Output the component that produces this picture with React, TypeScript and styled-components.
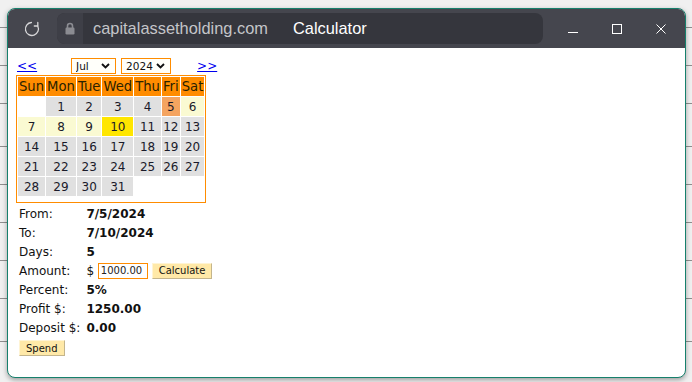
import { createGlobalStyle, styled } from 'styled-components'

const gridLines = [27, 65, 103, 146, 184, 222, 260, 298, 341]

const GlobalStyle = createGlobalStyle`
  html, body { margin: 0; height: 100%; }
  body {
    overflow: hidden;
    background-color: #f0f0f0;
    background-image: ${gridLines.map(() => 'linear-gradient(#8e8e8e, #8e8e8e)').join(', ')};
    background-size: 100% 1px;
    background-repeat: no-repeat;
    background-position: ${gridLines.map(y => `0 ${y}px`).join(', ')};
    font-family: 'DejaVu Sans', Verdana, sans-serif;
  }
  #root { padding: 8px 0 0 7px; }
`

type Tone = 'none' | 'day' | 'from' | 'range' | 'to'

const toneBg: Record<Tone, string> = {
	none: 'transparent',
	day: '#e0e0e0',
	from: '#f4a460',
	range: '#fafad2',
	to: '#ffe600',
}

const days = ['Sun', 'Mon', 'Tue', 'Wed', 'Thu', 'Fri', 'Sat']

function buildWeeks() {
	const cells: (number | null)[] = [null]
	for (let d = 1; d <= 31; d++) cells.push(d)
	while (cells.length % 7) cells.push(null)
	const weeks: (number | null)[][] = []
	for (let i = 0; i < cells.length; i += 7) weeks.push(cells.slice(i, i + 7))
	return weeks
}

function toneOf(d: number | null): Tone {
	if (d === null) return 'none'
	if (d === 5) return 'from'
	if (d === 10) return 'to'
	if (d > 5 && d < 10) return 'range'
	return 'day'
}

const info: [string, string][] = [
	['From:', '7/5/2024'],
	['To:', '7/10/2024'],
	['Days:', '5'],
]

const results: [string, string][] = [
	['Percent:', '5%'],
	['Profit $:', '1250.00'],
	['Deposit $:', '0.00'],
]

export default function App() {
	const weeks = buildWeeks()

	return (
		<>
			<GlobalStyle />
			<Window>
				<TitleBar>
					<Reload>
						<svg width="16" height="16" viewBox="0 0 16 16" fill="none" stroke="#d6d6d8" strokeWidth="1.3" strokeLinecap="round" strokeLinejoin="round">
							<path d="M7.4 1.5 A6.5 6.5 0 1 0 13.7 5" />
							<path d="M13.8 1.4 V5 H10.3" />
						</svg>
					</Reload>
					<Address>
						<LockBox>
							<svg width="10" height="13" viewBox="0 0 10 13">
								<path d="M2.5 6 V4 a2.5 2.5 0 0 1 5 0 V6" fill="none" stroke="#8b8c92" strokeWidth="1.6" />
								<rect x="0.5" y="5.5" width="9" height="7" rx="1.2" fill="#8b8c92" />
							</svg>
						</LockBox>
						<Domain>capitalassetholding.com</Domain>
						<PageTitle>Calculator</PageTitle>
					</Address>
					<Controls>
						<Control>
							<svg width="12" height="12" viewBox="0 0 12 12">
								<path d="M1 9.5 H11" stroke="#fff" strokeWidth="1" />
							</svg>
						</Control>
						<Control>
							<svg width="12" height="12" viewBox="0 0 12 12">
								<rect x="1.5" y="1.5" width="9" height="9" fill="none" stroke="#fff" strokeWidth="1" />
							</svg>
						</Control>
						<Control>
							<svg width="12" height="12" viewBox="0 0 12 12">
								<path d="M1.5 1.5 L10.5 10.5 M10.5 1.5 L1.5 10.5" stroke="#fff" strokeWidth="1" />
							</svg>
						</Control>
					</Controls>
				</TitleBar>

				<Content>
					<Nav>
						<NavLink href="#">{'<<'}</NavLink>
						<Selects>
							<SelectBox $width={45}>
								<Select defaultValue="Jul">
									<option>Jul</option>
								</Select>
								<Chevron />
							</SelectBox>
							<SelectBox $width={50}>
								<Select defaultValue="2024">
									<option>2024</option>
								</Select>
								<Chevron />
							</SelectBox>
						</Selects>
						<NavLink href="#" $next>{'>>'}</NavLink>
					</Nav>

					<Calendar>
						<thead>
							<tr>
								{days.map(d => (
									<HeadCell key={d}>{d}</HeadCell>
								))}
							</tr>
						</thead>
						<tbody>
							{weeks.map((w, i) => (
								<tr key={i}>
									{w.map((d, j) => (
										<DayCell key={j} $tone={toneOf(d)}>
											{d}
										</DayCell>
									))}
								</tr>
							))}
							<SpacerRow>
								<td colSpan={7} />
							</SpacerRow>
						</tbody>
					</Calendar>

					<InfoTable>
						<tbody>
							{info.map(([k, v]) => (
								<tr key={k}>
									<Label>{k}</Label>
									<Value>{v}</Value>
								</tr>
							))}
							<tr>
								<Label>Amount:</Label>
								<AmountCell>
									$ <AmountInput defaultValue="1000.00" /> <SmallButton>Calculate</SmallButton>
								</AmountCell>
							</tr>
							{results.map(([k, v]) => (
								<tr key={k}>
									<Label>{k}</Label>
									<Value>{v}</Value>
								</tr>
							))}
							<tr>
								<ButtonCell colSpan={2}>
									<SmallButton>Spend</SmallButton>
								</ButtonCell>
							</tr>
						</tbody>
					</InfoTable>
				</Content>
			</Window>
		</>
	)
}

function Chevron() {
	return (
		<svg width="9" height="6" viewBox="0 0 9 6">
			<path d="M1 1 L4.5 4.5 L8 1" fill="none" stroke="#111" strokeWidth="1.9" />
		</svg>
	)
}

const Window = styled.div`
	box-sizing: border-box;
	width: 679px;
	height: 370px;
	display: flex;
	flex-direction: column;
	border: 1px solid #16806c;
	border-radius: 8px;
	overflow: hidden;
	background: #fff;
	box-shadow: 0 2px 5px rgba(0, 0, 0, 0.35);
`

const TitleBar = styled.div`
	height: 39px;
	flex-shrink: 0;
	display: flex;
	align-items: center;
	padding-left: 16px;
	background: #45464e;
`

const Reload = styled.div`
	width: 16px;
	height: 16px;
	margin-right: 17px;
	display: flex;
`

const Address = styled.div`
	width: 486px;
	height: 31px;
	display: flex;
	align-items: center;
	border-radius: 8px;
	background: #35363d;
	font-family: 'Liberation Sans', Arial, sans-serif;
	font-size: 16.4px;
`

const LockBox = styled.div`
	width: 26px;
	height: 100%;
	display: flex;
	align-items: center;
	justify-content: center;
	border-radius: 8px 0 0 8px;
	background: #3e3f47;
`

const Domain = styled.span`
	margin-left: 10px;
	color: #c4c5c9;
`

const PageTitle = styled.span`
	margin-left: 25px;
	color: #fff;
`

const Controls = styled.div`
	display: flex;
	margin-left: 8px;
`

const Control = styled.div`
	width: 44px;
	height: 39px;
	display: flex;
	align-items: center;
	justify-content: center;
`

const Content = styled.div`
	flex: 1;
	padding: 8px 0 0 8px;
	color: #111;
`

const Nav = styled.div`
	height: 19px;
	display: flex;
	align-items: center;
`

const NavLink = styled.a<{ $next?: boolean }>`
	margin-left: ${p => (p.$next ? '26px' : '1px')};
	color: #0000ee;
	font-size: 12px;
	text-decoration: underline;
`

const Selects = styled.div`
	display: flex;
	gap: 5px;
	margin-left: 34px;
`

const SelectBox = styled.label<{ $width: number }>`
	box-sizing: border-box;
	width: ${p => p.$width}px;
	height: 16px;
	display: flex;
	align-items: center;
	padding: 0 5px 0 4px;
	border: 1px solid #ff8c00;
	background: #fffffa;
`

const Select = styled.select`
	flex: 1;
	min-width: 0;
	appearance: none;
	border: none;
	padding: 0;
	background: transparent;
	font-family: 'DejaVu Sans', Verdana, sans-serif;
	font-size: 10.5px;
	color: #111;
	outline: none;
`

const Calendar = styled.table`
	border: 1px solid #ff8c00;
	border-spacing: 1px;
	font-size: 12px;
`

const HeadCell = styled.th`
	height: 19px;
	padding: 0 1px;
	background: #ff8c00;
	color: #2a2200;
	font-size: 13.2px;
	font-weight: normal;
`

const DayCell = styled.td<{ $tone: Tone }>`
	height: 19px;
	padding: 0 1px;
	text-align: center;
	background: ${p => toneBg[p.$tone]};
	color: #1a1a2a;
`

const SpacerRow = styled.tr`
	height: 4px;

	td {
		padding: 0;
	}
`

const InfoTable = styled.table`
	border-spacing: 2px;
	font-size: 12px;
`

const Label = styled.td`
	height: 17px;
	padding: 0 3px 0 1px;
	white-space: nowrap;
`

const Value = styled.td`
	padding: 0 1px;
	font-weight: bold;
`

const AmountCell = styled.td`
	padding: 0 1px;
	white-space: nowrap;
`

const AmountInput = styled.input`
	box-sizing: border-box;
	width: 50px;
	height: 16px;
	padding: 0 2px;
	border: 1px solid #ff8c00;
	font-family: 'DejaVu Sans', Verdana, sans-serif;
	font-size: 10px;
	color: #222;
	vertical-align: middle;
	outline: none;
`

const SmallButton = styled.button`
	box-sizing: border-box;
	height: 16px;
	padding: 0 6px;
	border: 1px solid;
	border-color: #fff4d4 #c4b58c #c4b58c #fff4d4;
	background: #ffe9a8;
	font-family: 'DejaVu Sans', Verdana, sans-serif;
	font-size: 10px;
	color: #111;
	vertical-align: middle;
`

const ButtonCell = styled.td`
	padding: 2px 1px 0;
`
